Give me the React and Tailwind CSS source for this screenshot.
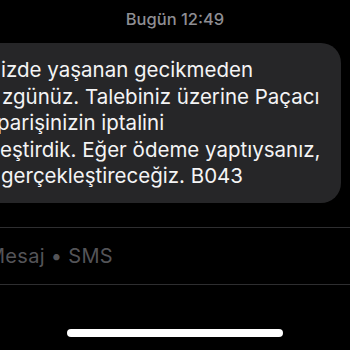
import React from 'react';

const lines = [
  { text: 'izde yaşanan gecikmeden', offset: 'ml-[1px]' },
  { text: 'zgünüz. Talebiniz üzerine Paçacı', offset: 'ml-[2px]' },
  { text: 'parişinizin iptalini', offset: '-ml-[3px]' },
  { text: 'eştirdik. Eğer ödeme yaptıysanız,', offset: 'ml-0' },
  { text: 'gerçekleştireceğiz. B043', offset: 'ml-[1px]' },
];

const App = () => {
  return (
    <div className="w-[350px] h-[350px] bg-black overflow-hidden flex flex-col font-['Inter',sans-serif]">
      {/* Date header */}
      <div className="h-[43px] pt-[9px] text-center text-[16.5px] leading-[20px] font-medium text-[#8e8e93]">
        Bugün 12:49
      </div>

      {/* Message bubble */}
      <div className="-ml-[24px] mr-[9px] h-[160px] rounded-[20px] bg-[#262628] pl-[24px] pt-[14px]">
        {lines.map(({ text, offset }) => (
          <div key={text} className={`${offset} whitespace-nowrap text-[20.5px] leading-[26.5px] text-[#f4f4f5]`}>
            {text}
          </div>
        ))}
      </div>

      {/* Input field */}
      <div className="mt-[24px] h-[58px] border-y border-[#2e2e30] flex items-center">
        <span className="-ml-[13px] whitespace-nowrap text-[20px] tracking-[0.3px] text-[#545458]">Mesaj • SMS</span>
      </div>

      {/* Home indicator */}
      <div className="flex-1 flex justify-center pt-[44px]">
        <div className="w-[216px] h-[8px] rounded-full bg-white"></div>
      </div>
    </div>
  );
};

export default App;
